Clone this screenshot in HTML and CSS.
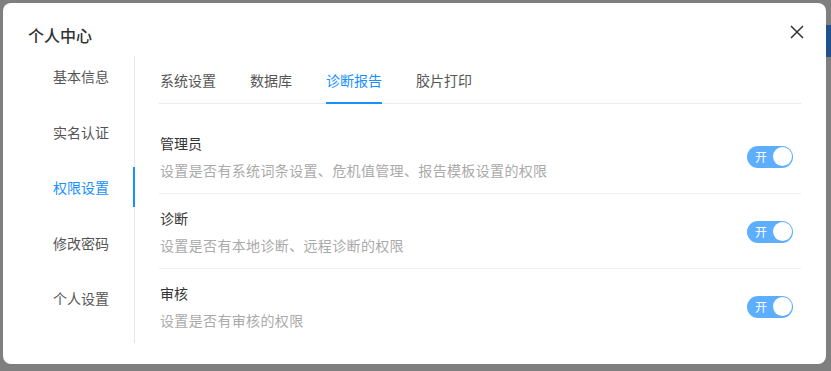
FILE: index.html
```html
<!DOCTYPE html>
<html lang="zh-CN">
<head>
    <meta charset="UTF-8">
    <meta name="viewport" content="width=device-width, initial-scale=1.0">
    <title>个人中心</title>
    <link rel="stylesheet" href="styles.css">
</head>
<body>
    <div class="dialog">
        <div class="dialog-header">
            <span class="dialog-title">个人中心</span>
            <svg class="close" width="14" height="14" viewBox="0 0 14 14">
                <path d="M1 1L13 13M13 1L1 13" stroke="#333" stroke-width="1.5" fill="none"/>
            </svg>
        </div>
        <div class="dialog-body">
            <ul class="side-menu">
                <li>基本信息</li>
                <li>实名认证</li>
                <li class="active">权限设置</li>
                <li>修改密码</li>
                <li>个人设置</li>
            </ul>
            <div class="main">
                <div class="tabs">
                    <span class="tab">系统设置</span>
                    <span class="tab">数据库</span>
                    <span class="tab active">诊断报告</span>
                    <span class="tab">胶片打印</span>
                </div>
                <div class="perm-list">
                    <div class="perm-item">
                        <div class="perm-text">
                            <div class="perm-title">管理员</div>
                            <div class="perm-desc">设置是否有系统词条设置、危机值管理、报告模板设置的权限</div>
                        </div>
                        <span class="switch"><span class="switch-label">开</span><span class="knob"></span></span>
                    </div>
                    <div class="perm-item">
                        <div class="perm-text">
                            <div class="perm-title">诊断</div>
                            <div class="perm-desc">设置是否有本地诊断、远程诊断的权限</div>
                        </div>
                        <span class="switch"><span class="switch-label">开</span><span class="knob"></span></span>
                    </div>
                    <div class="perm-item">
                        <div class="perm-text">
                            <div class="perm-title">审核</div>
                            <div class="perm-desc">设置是否有审核的权限</div>
                        </div>
                        <span class="switch"><span class="switch-label">开</span><span class="knob"></span></span>
                    </div>
                </div>
            </div>
        </div>
    </div>
    <div class="page-edge"></div>
</body>
</html>
```

FILE: styles.css
```css
body {
    margin: 0;
    padding: 3px 0 0 3px;
    background-color: #7f7f7f;
    font-family: "Noto Sans CJK SC", "Microsoft YaHei", sans-serif;
    color: #333;
    display: flex;
    align-items: flex-start;
    height: 371px;
    box-sizing: border-box;
    overflow: hidden;
}
.dialog {
    width: 823px;
    height: 361px;
    background: #fff;
    border-radius: 8px;
    box-sizing: border-box;
    flex-shrink: 0;
}
.page-edge {
    width: 5px;
    height: 32px;
    margin-top: 22px;
    background: #22508a;
}
.dialog-header {
    display: flex;
    justify-content: space-between;
    align-items: flex-start;
    padding: 20px 22px 9px 25px;
}
.dialog-title {
    font-size: 16px;
    line-height: 24px;
    font-weight: 500;
    color: #303133;
}
.close {
    margin-top: 2px;
}
.dialog-body {
    display: flex;
}
.side-menu {
    list-style: none;
    margin: 0;
    padding: 0;
    width: 131px;
    height: 287px;
    border-right: 1px solid #e6e6e6;
    display: flex;
    flex-direction: column;
    gap: 15.5px;
}
.side-menu li {
    height: 40px;
    line-height: 40px;
    padding-left: 50px;
    font-size: 14px;
    color: #555;
    margin-right: -1px;
    border-right: 2px solid transparent;
}
.side-menu li.active {
    color: #1890ff;
    border-right-color: #1890ff;
}
.main {
    flex: 1;
    padding: 0 25px 0 24px;
}
.tabs {
    display: flex;
    gap: 34px;
    padding-left: 1px;
    border-bottom: 1px solid #ebebeb;
}
.tab {
    font-size: 14px;
    line-height: 20px;
    padding: 14px 0 12px;
    margin-bottom: -1px;
    border-bottom: 2px solid transparent;
    color: #555;
}
.tab.active {
    color: #1890ff;
    border-bottom-color: #1890ff;
}
.perm-list {
    padding-top: 15px;
}
.perm-item {
    display: flex;
    align-items: center;
    justify-content: space-between;
    padding: 14px 8px 13px 1px;
    border-bottom: 1px solid #efefef;
}
.perm-item:last-child {
    border-bottom: none;
}
.perm-title {
    font-size: 14px;
    line-height: 20px;
    color: #333;
    margin-bottom: 7px;
}
.perm-desc {
    font-size: 14px;
    line-height: 20px;
    color: #aaa;
    letter-spacing: 0.35px;
}
.switch {
    width: 46px;
    height: 22px;
    border-radius: 11px;
    background: #5eaeff;
    display: flex;
    align-items: center;
    justify-content: space-between;
    padding: 0 1px 0 8px;
    box-sizing: border-box;
}
.switch-label {
    font-size: 12px;
    color: #fff;
    line-height: 22px;
}
.knob {
    width: 19px;
    height: 19px;
    border-radius: 50%;
    background: #fff;
}
```
